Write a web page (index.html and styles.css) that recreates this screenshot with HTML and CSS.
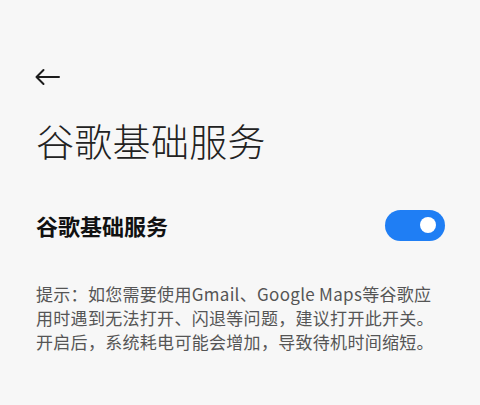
FILE: index.html
```html
<!DOCTYPE html>
<html lang="zh-CN">
<head>
<meta charset="utf-8">
<title>谷歌基础服务</title>
<link rel="stylesheet" href="styles.css">
</head>
<body>
<div class="page">
  <div class="topbar">
    <svg class="back" width="26" height="18" viewBox="0 0 26 18" aria-label="返回">
      <path d="M25 9 H2.5 M9.5 2 L2.5 9 L9.5 16" fill="none" stroke="#1c1c1c" stroke-width="2" stroke-linecap="round" stroke-linejoin="round"/>
    </svg>
  </div>
  <h1 class="title">谷歌基础服务</h1>
  <div class="row">
    <span class="row-label">谷歌基础服务</span>
    <div class="switch is-on"><span class="knob"></span></div>
  </div>
  <p class="hint">提示：如您需要使用Gmail、Google Maps等谷歌应<br>用时遇到无法打开、闪退等问题，建议打开此开关。<br>开启后，系统耗电可能会增加，导致待机时间缩短。</p>
</div>
</body>
</html>
```

FILE: styles.css
```css
html, body {
  margin: 0;
  padding: 0;
}

body {
  background: #f7f7f7;
  font-family: "Noto Sans CJK SC", "Noto Sans", sans-serif;
  color: #1a1a1a;
}

.page {
  padding: 0 36px;
}

.topbar {
  padding-top: 68px;
  height: 18px;
  display: flex;
  align-items: center;
}

.back {
  display: block;
  margin-left: -2px;
}

.title {
  margin: 32px 0 0;
  font-size: 38px;
  line-height: 44px;
  font-weight: 300;
  color: #222;
  letter-spacing: 0.3px;
}

.row {
  margin-top: 47px;
  height: 32px;
  display: flex;
  align-items: center;
  justify-content: space-between;
}

.row-label {
  font-size: 22px;
  line-height: 28px;
  font-weight: 700;
  color: #111;
}

.switch {
  width: 60px;
  height: 31px;
  border-radius: 16px;
  background: #c9c9c9;
  display: flex;
  align-items: center;
  justify-content: flex-start;
  padding: 0 9px;
  box-sizing: border-box;
  margin-right: -1px;
}

.switch.is-on {
  background: #1f7ef4;
  justify-content: flex-end;
}

.knob {
  width: 16px;
  height: 16px;
  border-radius: 50%;
  background: #fff;
}

.hint {
  margin: 41px 0 0;
  font-size: 17px;
  line-height: 24px;
  color: #555;
  letter-spacing: 0.3px;
}
```
